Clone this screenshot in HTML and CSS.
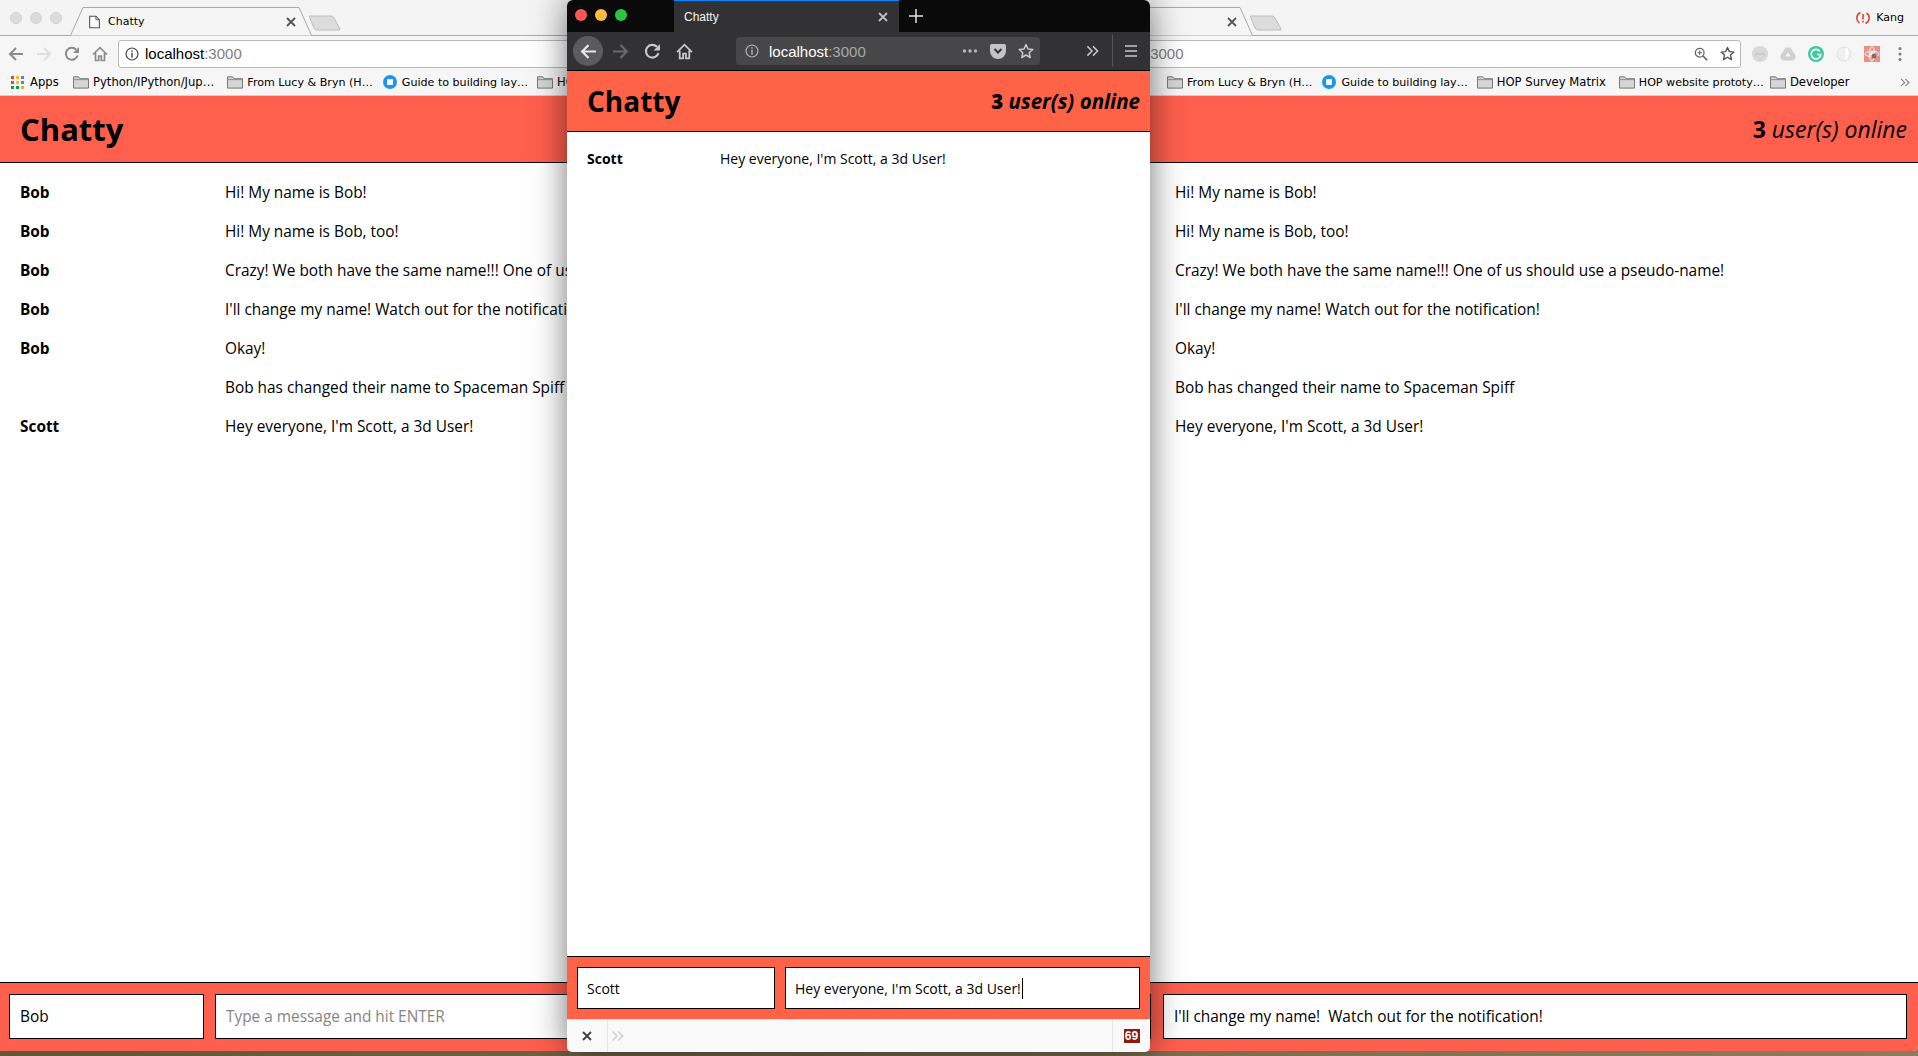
FILE: index.html
```html
<!DOCTYPE html>
<html lang="en">
<head>
  <meta charset="UTF-8">
  <title>Chatty</title>
  <link rel="stylesheet" href="styles.css">
</head>
<body>

  <svg class="icon-defs" aria-hidden="true">
    <symbol id="i-back" viewBox="0 0 16 16"><path d="M15 8H2M8 2 2 8l6 6" fill="none" stroke="currentColor" stroke-width="2"/></symbol>
    <symbol id="i-reload" viewBox="0 0 16 16"><path d="M13.600 9.500A6 6 0 1 1 12.200 3.600" fill="none" stroke="currentColor" stroke-width="2"/><path d="M15 1v6H9z" fill="currentColor"/></symbol>
    <symbol id="i-home" viewBox="0 0 16 16"><path d="M1 8.500 8 1.600l7 6.900M3.500 7v7.500h3.200V10h2.600v4.500h3.200V7" fill="none" stroke="currentColor" stroke-width="1.700"/></symbol>
    <symbol id="i-info" viewBox="0 0 16 16"><circle cx="8" cy="8" r="6.800" fill="none" stroke="currentColor" stroke-width="1.300"/><path d="M7.200 3.600h1.600v1.700H7.200zM7.200 6.700h1.600v5.600H7.200z" fill="currentColor"/></symbol>
    <symbol id="i-star" viewBox="0 0 16 16"><path d="M8 1.600 10 6l4.800.5-3.600 3.200 1 4.800L8 12l-4.200 2.500 1-4.800L1.200 6.500 6 6z" fill="none" stroke="currentColor" stroke-width="1.500" stroke-linejoin="round"/></symbol>
    <symbol id="i-folder" viewBox="0 0 17 14"><path d="M.5 13.500V1.500h5.500l1.500 2h9v10z" fill="#d6d6d6" stroke="#6e6e6e"/><path d="M.5 4.500h16" stroke="#8a8a8a"/></symbol>
    <symbol id="i-chevrons" viewBox="0 0 14 12"><path d="M1.500 1 6.500 6 1.500 11M7.500 1 12.500 6 7.500 11" fill="none" stroke="currentColor" stroke-width="1.600"/></symbol>
    <symbol id="i-close" viewBox="0 0 10 10"><path d="M1 1 9 9M9 1 1 9" fill="none" stroke="currentColor" stroke-width="1.800"/></symbol>
    <symbol id="i-blue" viewBox="0 0 14 14"><circle cx="7" cy="7" r="7" fill="#1a96f0"/><rect x="4" y="4" width="6" height="6" rx="1" fill="#fff"/></symbol>
  </svg>

  <!-- window on the left -->
  <div class="window chrome chrome-left">
    <div class="tabstrip">
      <div class="lights"><span></span><span></span><span></span></div>
      <div class="tab">
        <svg class="tab-shape" viewBox="0 0 242 29"><path d="M0 28.500h.5L13 .5h216L241.500 28.500h.5" fill="#f5f5f5" stroke="#a9a9a9"/></svg>
        <svg class="doc" viewBox="0 0 12 14"><path d="M.7.7h6.800l3.800 3.800v8.800H.7z" fill="#fff" stroke="#555" stroke-width="1.200"/><path d="M7.500.7v3.800h3.800" fill="none" stroke="#555"/></svg>
        <span class="tab-title">Chatty</span>
        <svg class="tab-close"><use href="#i-close"/></svg>
      </div>
      <svg class="newtab" viewBox="0 0 33 16"><path d="M1 1h21q2 0 3 2l6 11q.5 1-1 1H8q-2 0-3-2L.5 2Q0 1 1 1z" fill="#dcdcdc" stroke="#bdbdbd"/></svg>
    </div>
    <div class="toolbar">
      <svg class="tool"><use href="#i-back"/></svg>
      <svg class="tool tool-off"><use href="#i-back"/></svg>
      <svg class="tool"><use href="#i-reload"/></svg>
      <svg class="tool"><use href="#i-home"/></svg>
      <div class="omnibox">
        <svg class="omni-info"><use href="#i-info"/></svg>
        <span class="host">localhost<span class="port">:3000</span></span>
      </div>
    </div>
    <div class="bookmarks">
      <div class="mark mark-apps">
        <svg class="apps" viewBox="0 0 13 13">
          <rect width="3" height="3" fill="#e8453c"/><rect x="5" width="3" height="3" fill="#f9bb2d"/><rect x="10" width="3" height="3" fill="#4285f4"/>
          <rect y="5" width="3" height="3" fill="#e8453c"/><rect x="5" y="5" width="3" height="3" fill="#f9bb2d"/><rect x="10" y="5" width="3" height="3" fill="#4285f4"/>
          <rect y="10" width="3" height="3" fill="#0f9d58"/><rect x="5" y="10" width="3" height="3" fill="#0f9d58"/><rect x="10" y="10" width="3" height="3" fill="#f9a825"/>
        </svg>
        <span>Apps</span>
      </div>
      <div class="mark"><svg class="folder"><use href="#i-folder"/></svg><span>Python/IPython/Jup…</span></div>
      <div class="mark mark-wide mark-cut"><svg class="folder"><use href="#i-folder"/></svg><span>From Lucy &amp; Bryn (H…</span></div>
      <div class="mark mark-cut"><svg class="folder"><use href="#i-blue"/></svg><span>Guide to building lay…</span></div>
      <div class="mark"><svg class="folder"><use href="#i-folder"/></svg><span>HOP</span></div>
    </div>
    <div class="app">
      <header class="app-head">
        <h1 class="brand">Chatty</h1>
      </header>
      <main class="messages">
        <div class="row"><b class="who">Bob</b><span>Hi! My name is Bob!</span></div>
        <div class="row"><b class="who">Bob</b><span>Hi! My name is Bob, too!</span></div>
        <div class="row"><b class="who">Bob</b><span>Crazy! We both have the same name!!! One of us should use a pseudo-name!</span></div>
        <div class="row"><b class="who">Bob</b><span>I'll change my name! Watch out for the notification!</span></div>
        <div class="row"><b class="who">Bob</b><span>Okay!</span></div>
        <div class="row"><b class="who"></b><span>Bob has changed their name to Spaceman Spiff</span></div>
        <div class="row"><b class="who">Scott</b><span>Hey everyone, I'm Scott, a 3d User!</span></div>
      </main>
      <footer class="chatbar">
        <input class="field field-name" type="text" value="Bob">
        <input class="field field-msg" type="text" placeholder="Type a message and hit ENTER">
      </footer>
    </div>
  </div>

  <!-- window on the right, its left part lies under firefox -->
  <div class="window chrome chrome-right">
    <div class="tabstrip">
      <div class="lights"></div>
      <div class="tab">
        <svg class="tab-shape" viewBox="0 0 242 29"><path d="M0 28.500h.5L13 .5h216L241.500 28.500h.5" fill="#f5f5f5" stroke="#a9a9a9"/></svg>
        <svg class="tab-close"><use href="#i-close"/></svg>
      </div>
      <svg class="newtab" viewBox="0 0 33 16"><path d="M1 1h21q2 0 3 2l6 11q.5 1-1 1H8q-2 0-3-2L.5 2Q0 1 1 1z" fill="#dcdcdc" stroke="#bdbdbd"/></svg>
      <div class="profile">
        <svg class="sync" viewBox="0 0 14 14"><path d="M4.500 1.500A6 6 0 0 0 3.500 12M9.500 12.500A6 6 0 0 0 10.500 2" fill="none" stroke="#d9473b" stroke-width="1.600"/><path d="M6.200 3h1.600v5.500H6.200zM6.200 9.800h1.600v1.600H6.200z" fill="#d9473b"/></svg>
        <span>Kang</span>
      </div>
    </div>
    <div class="toolbar">
      <div class="omnibox">
        <span class="host"><span class="port">:3000</span></span>
        <svg class="omni-zoom" viewBox="0 0 16 16"><circle cx="6.500" cy="6.500" r="5" fill="none" stroke="#666" stroke-width="1.400"/><path d="M10 10l5 5" stroke="#666" stroke-width="2"/><path d="M4 6.500h5M6.500 4v5" stroke="#666" stroke-width="1.200"/></svg>
        <svg class="omni-star"><use href="#i-star"/></svg>
      </div>
      <div class="exts">
        <svg class="ext" viewBox="0 0 16 16"><circle cx="8" cy="8" r="8" fill="#d9d9d9"/><path d="M3 10l2-3 1.500 2L8 7l1.500 2L11 7l2 3" fill="none" stroke="#c4c4c4"/></svg>
        <svg class="ext" viewBox="0 0 16 16"><path d="M5.500 1.500h5L16 10.500l-2.500 4H2.500L0 10.500z" fill="#d0d0d0"/><path d="M5.500 10.500 8 6l2.500 4.500z" fill="#f5f5f5"/></svg>
        <svg class="ext" viewBox="0 0 16 16"><circle cx="8" cy="8" r="8" fill="#3fc9a1"/><path d="M11.800 5.200A4.800 4.800 0 1 0 12.800 8.500H9" fill="none" stroke="#fff" stroke-width="1.600"/></svg>
        <svg class="ext" viewBox="0 0 16 16"><circle cx="8" cy="8" r="7" fill="#f0f0f0" stroke="#e0e0e0"/><path d="M10 2.500q3 5.500-1 11" fill="none" stroke="#fff" stroke-width="2.500"/></svg>
        <svg class="ext" viewBox="0 0 16 16"><rect width="16" height="16" fill="#ed8f84"/><circle cx="8" cy="8" r="2" fill="#fff"/><ellipse cx="8" cy="8" rx="7" ry="2.600" fill="none" stroke="#fff"/><ellipse cx="8" cy="8" rx="2.600" ry="7" fill="none" stroke="#fff"/><circle cx="10" cy="10" r="2.500" fill="#8a6a62"/></svg>
        <svg class="ext ext-dots" viewBox="0 0 16 16"><circle cx="8" cy="2.500" r="1.500"/><circle cx="8" cy="8" r="1.500"/><circle cx="8" cy="13.500" r="1.500"/></svg>
      </div>
    </div>
    <div class="bookmarks">
      <div class="mark mark-wide mark-cut"><svg class="folder"><use href="#i-folder"/></svg><span>From Lucy &amp; Bryn (H…</span></div>
      <div class="mark mark-cut"><svg class="folder"><use href="#i-blue"/></svg><span>Guide to building lay…</span></div>
      <div class="mark"><svg class="folder"><use href="#i-folder"/></svg><span>HOP Survey Matrix</span></div>
      <div class="mark mark-wide mark-cut"><svg class="folder"><use href="#i-folder"/></svg><span>HOP website prototy…</span></div>
      <div class="mark mark-tight"><svg class="folder"><use href="#i-folder"/></svg><span>Developer</span></div>
      <svg class="more"><use href="#i-chevrons"/></svg>
    </div>
    <div class="app">
      <header class="app-head">
        <div class="online"><b>3</b> <i>user(s) online</i></div>
      </header>
      <main class="messages">
        <div class="row"><span>Hi! My name is Bob!</span></div>
        <div class="row"><span>Hi! My name is Bob, too!</span></div>
        <div class="row"><span>Crazy! We both have the same name!!! One of us should use a pseudo-name!</span></div>
        <div class="row"><span>I'll change my name! Watch out for the notification!</span></div>
        <div class="row"><span>Okay!</span></div>
        <div class="row"><span>Bob has changed their name to Spaceman Spiff</span></div>
        <div class="row"><span>Hey everyone, I'm Scott, a 3d User!</span></div>
      </main>
      <footer class="chatbar">
        <input class="field field-name" type="text">
        <input class="field field-msg" type="text" value="I'll change my name!  Watch out for the notification!">
      </footer>
    </div>
  </div>

  <!-- firefox on top -->
  <div class="window firefox">
    <div class="fx-tabs">
      <div class="fx-lights"><span class="red"></span><span class="yellow"></span><span class="green"></span></div>
      <div class="fx-tab">
        <span>Chatty</span>
        <svg class="fx-close"><use href="#i-close"/></svg>
      </div>
      <svg class="fx-plus" viewBox="0 0 14 14"><path d="M7 0v14M0 7h14" stroke="#e4e4e4" stroke-width="1.500"/></svg>
    </div>
    <div class="fx-toolbar">
      <div class="fx-backbtn"><svg class="fx-tool"><use href="#i-back"/></svg></div>
      <svg class="fx-tool fx-forward"><use href="#i-back"/></svg>
      <svg class="fx-tool"><use href="#i-reload"/></svg>
      <svg class="fx-tool"><use href="#i-home"/></svg>
      <div class="fx-url">
        <svg class="fx-info"><use href="#i-info"/></svg>
        <span class="fx-host">localhost<span class="fx-port">:3000</span></span>
        <svg class="fx-dots" viewBox="0 0 16 4"><circle cx="2.500" cy="2" r="1.700"/><circle cx="8" cy="2" r="1.700"/><circle cx="13.500" cy="2" r="1.700"/></svg>
        <svg class="fx-pocket" viewBox="0 0 16 15"><path d="M1.500 0h13Q16 0 16 1.500V7A8 8 0 0 1 0 7V1.500Q0 0 1.500 0z" fill="#c4c4c6"/><path d="M4.500 5 8 8.500 11.500 5" fill="none" stroke="#38383a" stroke-width="2"/></svg>
        <svg class="fx-star"><use href="#i-star"/></svg>
      </div>
      <svg class="fx-more"><use href="#i-chevrons"/></svg>
      <span class="fx-sep"></span>
      <svg class="fx-menu" viewBox="0 0 12 12"><path d="M0 1h12M0 6h12M0 11h12" stroke="#c8c8ca" stroke-width="1.600"/></svg>
    </div>
    <div class="app app-fx">
      <header class="app-head">
        <h1 class="brand">Chatty</h1>
        <div class="online"><b>3</b> <i>user(s) online</i></div>
      </header>
      <main class="messages">
        <div class="row"><b class="who">Scott</b><span>Hey everyone, I'm Scott, a 3d User!</span></div>
      </main>
      <footer class="chatbar">
        <input class="field field-name" type="text" value="Scott">
        <div class="field field-msg">Hey everyone, I'm Scott, a 3d User!<span class="caret"></span></div>
      </footer>
    </div>
    <div class="addonbar">
      <div class="addon-close"><svg class="addon-x"><use href="#i-close"/></svg></div>
      <svg class="addon-more"><use href="#i-chevrons"/></svg>
      <div class="addon-badge"><span>69</span></div>
    </div>
  </div>

</body>
</html>
```

FILE: styles.css
```css
* {
  box-sizing: border-box;
}

html, body {
  margin: 0;
  height: 100%;
  overflow: hidden;
}

body {
  position: relative;
  font-family: "Open Sans", sans-serif;
  color: #000;
  background: linear-gradient(90deg, #5f5639, #8a7c60);
}

.icon-defs {
  width: 0;
  height: 0;
  position: absolute;
}

.window {
  position: absolute;
  top: 0;
  height: 1051px;
  display: flex;
  flex-direction: column;
  overflow: hidden;
}

.chrome-left {
  left: 0;
  width: 960px;
}

.chrome-right {
  left: 941px;
  width: 977px;
  border-radius: 0 0 5px 0;
}

/* chrome */
.tabstrip {
  height: 36px;
  flex: none;
  display: flex;
  align-items: flex-start;
  background: #f4f4f4;
  border-bottom: 1px solid #a9a9a9;
  font-family: "DejaVu Sans", sans-serif;
  font-size: 11px;
}

.lights {
  display: flex;
  gap: 8px;
  padding: 12px 8px 0 10px;
  width: 70px;
}

.lights span {
  width: 12px;
  height: 12px;
  border-radius: 50%;
  background: #dcdcdc;
  border: 1px solid #d2d2d2;
}

.tab {
  position: relative;
  width: 242px;
  height: 29px;
  margin-top: 7px;
  display: flex;
  align-items: center;
  padding: 0 16px 0 19px;
}

.tab-shape {
  position: absolute;
  left: 0;
  top: 0;
  width: 242px;
  height: 29px;
}

.doc {
  position: relative;
  width: 11px;
  height: 14px;
  margin-right: 8px;
}

.tab-title {
  position: relative;
}

.tab-close {
  position: relative;
  width: 10px;
  height: 10px;
  margin-left: auto;
  color: #555;
}

.newtab {
  width: 33px;
  height: 16px;
  margin: 15px 0 0 -3px;
}

.profile {
  margin-left: auto;
  align-self: center;
  display: flex;
  align-items: center;
  gap: 6px;
  padding-right: 14px;
}

.sync {
  width: 14px;
  height: 14px;
}

.toolbar {
  height: 35px;
  flex: none;
  display: flex;
  align-items: center;
  background: #f6f6f6;
  padding-left: 8px;
  gap: 12px;
}

.tool {
  width: 16px;
  height: 16px;
  flex: none;
  color: #8b8b8b;
}

.tool-off {
  color: #dedede;
  transform: scaleX(-1);
}

.omnibox {
  flex: 1;
  height: 28px;
  margin-left: -2px;
  display: flex;
  align-items: center;
  background: #fff;
  border: 1px solid #b9b9b9;
  border-radius: 3px;
  padding: 0 5px 0 6px;
  font-family: "Liberation Sans", sans-serif;
  font-size: 15px;
}

.omni-info {
  width: 14px;
  height: 14px;
  color: #444;
  margin-right: 6px;
}

.port {
  color: #808080;
}

.chrome-right .port {
  margin-left: 192px;
}

.omni-zoom {
  width: 14px;
  height: 14px;
  margin-left: auto;
}

.omni-star {
  width: 15px;
  height: 15px;
  margin-left: 12px;
  color: #555;
}

.exts {
  display: flex;
  gap: 12px;
  margin-left: -1px;
  padding-right: 10px;
}

.ext {
  width: 16px;
  height: 16px;
}

.ext-dots {
  fill: #7d7d7d;
}

.bookmarks {
  height: 25px;
  flex: none;
  display: flex;
  align-items: center;
  gap: 9px;
  padding: 0 0 2px 11px;
  background: #f6f6f6;
  border-bottom: 1px solid #d0d0d0;
  font-family: "DejaVu Sans", sans-serif;
  font-size: 11.6px;
  white-space: nowrap;
}

.chrome-right .bookmarks {
  padding-left: 222px;
}

.mark {
  display: flex;
  align-items: center;
  gap: 4px;
}

.mark-wide {
  margin-left: 4px;
}

.mark-tight {
  margin-left: -3px;
}

.mark-cut {
  font-size: 11.1px;
}

.mark-apps {
  gap: 6px;
  width: 53px;
}

.apps {
  width: 13px;
  height: 13px;
}

.folder {
  width: 16px;
  height: 14px;
}

.more {
  width: 10px;
  height: 9px;
  margin-left: auto;
  margin-right: 8px;
  color: #888;
}

/* the chat app */
.app {
  flex: 1;
  min-height: 0;
  display: flex;
  flex-direction: column;
  background: #fff;
}

.app-head {
  height: 67px;
  flex: none;
  display: flex;
  align-items: center;
  justify-content: space-between;
  padding: 0 11px 0 20px;
  background: #ff5f4d;
  border-bottom: 1px solid #000;
}

.chrome-right .app-head {
  justify-content: flex-end;
}

.brand {
  margin: 0;
  font-size: 31px;
  font-weight: 700;
}

.online {
  font-size: 23px;
}

.messages {
  flex: 1;
  padding-top: 10px;
  font-size: 15.4px;
  white-space: nowrap;
}

.row {
  display: flex;
  height: 39px;
  line-height: 39px;
  padding-left: 20px;
}

.who {
  width: 205px;
  flex: none;
}

.chrome-right .row {
  padding-left: 234px;
}

.chatbar {
  height: 69px;
  flex: none;
  display: flex;
  gap: 11px;
  padding: 11px 11px 0 9px;
  background: #ff5f4d;
  border-top: 1px solid #000;
}

.chrome-right .chatbar {
  gap: 12px;
}

.field {
  height: 45px;
  border: 1px solid #000;
  border-radius: 0;
  background: #fff;
  padding: 0 10px;
  font-family: "Open Sans", sans-serif;
  font-size: 15.4px;
  color: #000;
  outline: none;
}

.field::placeholder {
  color: #858585;
}

.field-name {
  width: 195px;
  flex: none;
}

.chrome-right .field-name {
  width: 201px;
}

.field-msg {
  flex: 1;
  min-width: 0;
}

/* firefox */
.firefox {
  left: 567px;
  width: 583px;
  height: 1052px;
  border-radius: 6px 6px 5px 5px;
  box-shadow: 0 0 34px rgba(0, 0, 0, 0.55);
}

.fx-tabs {
  height: 32px;
  flex: none;
  display: flex;
  background: #0a0a0a;
}

.fx-lights {
  width: 107px;
  display: flex;
  gap: 8px;
  padding: 9px 0 0 8px;
}

.fx-lights span {
  width: 12px;
  height: 12px;
  border-radius: 50%;
}

.fx-lights .red {
  background: #fc5753;
}

.fx-lights .yellow {
  background: #fdbc40;
}

.fx-lights .green {
  background: #27c83f;
}

.fx-tab {
  width: 225px;
  display: flex;
  align-items: center;
  justify-content: space-between;
  padding: 0 11px 0 10px;
  background: #323234;
  border-top: 1px solid #0a84ff;
  color: #f4f4f4;
  font-family: "Liberation Sans", sans-serif;
  font-size: 12px;
}

.fx-close {
  width: 10px;
  height: 10px;
  color: #bdbdbf;
}

.fx-plus {
  width: 14px;
  height: 14px;
  margin: 9px 0 0 10px;
}

.fx-toolbar {
  height: 38px;
  flex: none;
  display: flex;
  align-items: center;
  gap: 15px;
  padding-left: 6px;
  background: #323234;
  color: #c8c8ca;
}

.fx-backbtn {
  width: 30px;
  height: 30px;
  display: flex;
  align-items: center;
  justify-content: center;
  border-radius: 50%;
  background: #5b5b5d;
  margin-right: -6px;
}

.fx-tool {
  width: 17px;
  height: 17px;
  flex: none;
}

.fx-backbtn .fx-tool {
  color: #e8e8e8;
}

.fx-forward {
  color: #68686a;
  transform: scaleX(-1);
}

.fx-url {
  width: 304px;
  height: 28px;
  display: flex;
  align-items: center;
  margin-left: 28px;
  padding: 0 6px 0 9px;
  background: #474749;
  border-radius: 4px;
  font-family: "Liberation Sans", sans-serif;
  font-size: 15px;
  color: #fff;
}

.fx-url .fx-info {
  width: 14px;
  height: 14px;
  color: #b4b4b6;
  margin-right: 10px;
}

.fx-port {
  color: #a8a8aa;
}

.fx-dots {
  width: 16px;
  height: 4px;
  margin-left: auto;
  fill: #b8b8ba;
}

.fx-pocket {
  width: 16px;
  height: 15px;
  margin-left: 12px;
}

.fx-star {
  width: 16px;
  height: 16px;
  margin-left: 12px;
  color: #c8c8ca;
}

.fx-more {
  width: 13px;
  height: 12px;
  margin-left: 31px;
  margin-right: -2px;
}

.fx-sep {
  width: 1px;
  height: 32px;
  background: #58585a;
}

.fx-menu {
  width: 12px;
  height: 12px;
  margin-left: -3px;
}

.app-fx .app-head {
  height: 62px;
  padding-right: 10px;
  background: #ff6347;
  border-top: 1px solid #000;
}

.app-fx .brand {
  font-size: 28px;
}

.app-fx .online {
  font-size: 20.5px;
  font-weight: 700;
}

.app-fx .messages {
  padding-top: 9px;
  font-size: 14px;
}

.app-fx .row {
  height: 36px;
  line-height: 36px;
}

.app-fx .who {
  width: 133px;
}

.app-fx .chatbar {
  height: 63px;
  gap: 10px;
  padding: 10px 10px 0 10px;
  background: #ff6347;
}

.app-fx .field {
  height: 42px;
  font-size: 14px;
  padding: 0 9px;
}

.app-fx .field-name {
  width: 198px;
}

.app-fx .field-msg {
  display: flex;
  align-items: center;
  white-space: nowrap;
}

.caret {
  width: 1px;
  height: 21px;
  background: #000;
  margin-left: 1px;
}

.addonbar {
  height: 33px;
  flex: none;
  display: flex;
  align-items: center;
  background: #f9f9fa;
  border-top: 1px solid #e4e4e4;
}

.addon-close {
  width: 41px;
  height: 100%;
  display: flex;
  align-items: center;
  justify-content: center;
  border-right: 1px solid #e8e8e8;
}

.addon-x {
  width: 10px;
  height: 10px;
  color: #3f3f41;
}

.addon-more {
  width: 13px;
  height: 12px;
  margin-left: 3px;
  color: #d2d2d2;
}

.addon-badge {
  width: 38px;
  height: 100%;
  margin-left: auto;
  display: flex;
  align-items: center;
  justify-content: center;
  border-left: 1px solid #e8e8e8;
}

.addon-badge span {
  width: 16px;
  height: 14px;
  background: #8f1a0e;
  color: #fff;
  font-family: "Liberation Sans", sans-serif;
  font-size: 12px;
  font-weight: 700;
  line-height: 14px;
  text-align: center;
}
```
